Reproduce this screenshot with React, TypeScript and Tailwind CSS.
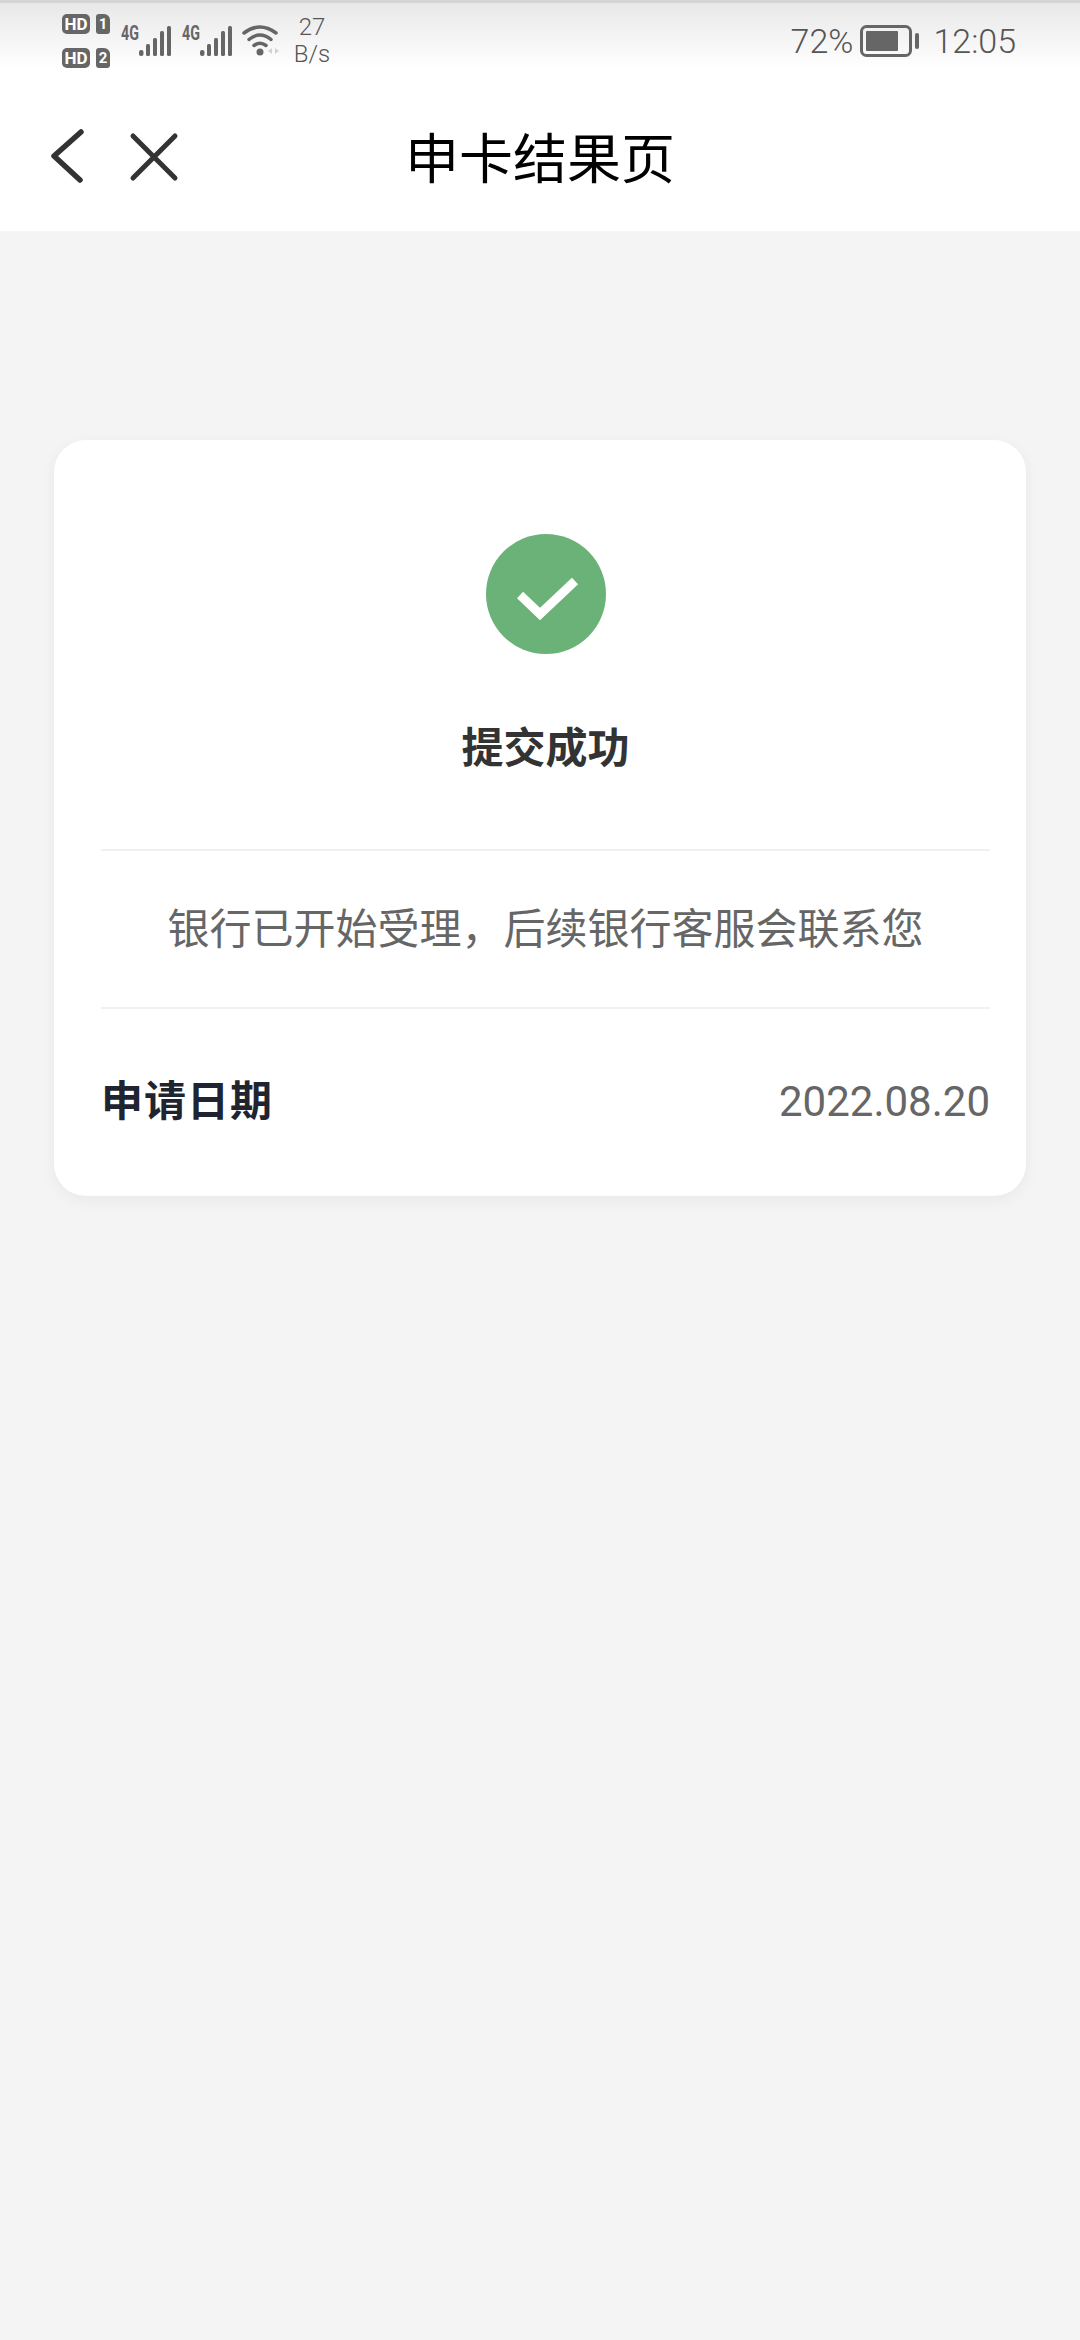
const SANS = 'font-["Roboto","Noto_Sans_CJK_SC",sans-serif]'

function SimBadge({ n }: { n: string }) {
  return (
    <div className="flex h-[20px] items-center gap-[6px]">
      <span className="flex h-[20px] w-[28px] items-center justify-center rounded-[5px] bg-[#666666] text-[17px] leading-none font-bold text-white">
        HD
      </span>
      <span className="flex h-[20px] w-[14px] items-center justify-center rounded-[3px] rounded-tr-[6px] bg-[#666666] text-[15px] leading-none font-bold text-white">
        {n}
      </span>
    </div>
  )
}

function Signal() {
  return (
    <div className="flex h-[36px] w-[50px] items-start">
      <span className="w-[18px] origin-left scale-x-[0.68] text-[21px] leading-[18px] font-bold whitespace-nowrap text-[#666666]">4G</span>
      <svg width="32" height="32" viewBox="0 0 32 32" className="mt-[2px]" fill="#666666">
        <rect x="0" y="24" width="4.5" height="6" rx="2" />
        <rect x="7" y="18" width="4" height="12" rx="1.5" />
        <rect x="14" y="12" width="4" height="18" rx="1.5" />
        <rect x="21" y="5" width="4" height="25" rx="1.5" />
        <rect x="28" y="0" width="4" height="30" rx="1.5" />
      </svg>
    </div>
  )
}

function Wifi() {
  return (
    <svg width="38" height="32" viewBox="0 0 38 32" fill="none" className="mt-[4px]">
      <path d="M2 9 Q18 -3 34 9" stroke="#666666" strokeWidth="3.5" strokeLinecap="round" />
      <path d="M7 15.5 Q18 6.5 29 15.5" stroke="#666666" strokeWidth="3.5" strokeLinecap="round" />
      <path d="M12 21.5 Q18 17 24 21.5" stroke="#666666" strokeWidth="3.5" strokeLinecap="round" />
      <circle cx="18" cy="28" r="3.5" fill="#666666" />
      <path d="M30 24 L26 27 L30 30 Z M33 24 L37 27 L33 30 Z" fill="#d2d2d2" />
    </svg>
  )
}

function Battery() {
  return (
    <svg width="59" height="32" viewBox="0 0 59 32" fill="none">
      <rect x="1.5" y="1.5" width="49" height="29" rx="5" stroke="#666666" strokeWidth="3" />
      <rect x="6" y="6" width="32" height="20" rx="1" fill="#666666" />
      <rect x="55" y="8" width="4" height="16" rx="2" fill="#666666" />
    </svg>
  )
}

export default function App() {
  return (
    <div className={`${SANS} flex min-h-[2340px] w-[1080px] flex-col bg-[#f4f4f4]`}>
      {/* Status bar */}
      <div className="h-[80px] border-t-[3px] border-[#d4d4d4] bg-gradient-to-b from-[#e8e8e8] to-white to-85%">
        <div className="flex items-start pt-[11px] pr-[64px] pl-[62px]">
          <div className="flex flex-col gap-[14px]">
            <SimBadge n="1" />
            <SimBadge n="2" />
          </div>
          <div className="mt-[10px] ml-[11px] flex gap-[11px]">
            <Signal />
            <Signal />
          </div>
          <div className="mt-[6px] ml-[10px]">
            <Wifi />
          </div>
          <div className="ml-[14px] flex w-[36px] flex-col items-center text-[24px] leading-[27px] font-light text-[#555555]">
            <span>27</span>
            <span>B/s</span>
          </div>
          <div className="mt-[10px] ml-auto flex items-center text-[34px] leading-[34px] font-light text-[#555555]">
            <span>72%</span>
            <span className="mx-[7px] flex">
              <Battery />
            </span>
            <span className="ml-[7px]">12:05</span>
          </div>
        </div>
      </div>

      {/* Nav */}
      <div className="relative flex h-[151px] items-center justify-center bg-white pt-[10px]">
        <div className="absolute top-[49px] left-[49px] flex items-start gap-[44px]">
          <svg width="36" height="58" viewBox="0 0 36 58" fill="none" stroke="#333333" strokeWidth="5.5" strokeLinecap="round" strokeLinejoin="round">
            <path d="M32 3 L5 27 L31 51" />
          </svg>
          <svg width="50" height="50" viewBox="0 0 50 50" fill="none" stroke="#333333" strokeWidth="5" strokeLinecap="round" className="mt-[3px]">
            <path d="M4 4 L46 46 M46 4 L4 46" />
          </svg>
        </div>
        <span className="text-[54px] leading-none text-black">申卡结果页</span>
      </div>

      {/* Result card */}
      <div className="mx-[54px] mt-[209px] flex h-[756px] flex-col rounded-[32px] bg-white pr-[36px] pl-[47px] shadow-[0_4px_16px_rgba(0,0,0,0.05)]">
        <div className="flex flex-col items-center">
          <div className="mt-[94px] flex h-[120px] w-[120px] items-center justify-center rounded-full bg-[#6ab277]">
            <svg width="62" height="46" viewBox="0 0 62 46" fill="none" stroke="#ffffff" strokeWidth="9" className="mt-[10px] ml-[4px]">
              <path d="M3 19 L23 38 L58 5" />
            </svg>
          </div>
          <h1 className="mt-[67px] text-[42px] leading-[56px] font-bold text-[#333333]">提交成功</h1>
        </div>
        <div className="mt-[72px] h-[2px] bg-[#f0f0f0]" />
        <p className="flex h-[156px] items-center justify-center text-[42px] text-[#666666]">
          银行已开始受理，后续银行客服会联系您
        </p>
        <div className="h-[2px] bg-[#f0f0f0]" />
        <div className="mt-[63px] flex items-center justify-between">
          <span className="text-[42px] leading-[60px] font-bold tracking-[1px] text-[#1f2430]">申请日期</span>
          <span className="text-[42px] leading-[60px] text-[#666666]">2022.08.20</span>
        </div>
      </div>
    </div>
  )
}
